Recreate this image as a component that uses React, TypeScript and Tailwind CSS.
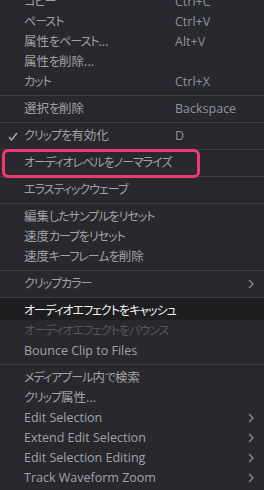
import React from 'react';

type Item =
    | { type: 'sep' }
    | { type: 'item'; label: string; shortcut?: string; check?: boolean; sub?: boolean; state?: 'hover' | 'disabled'; marked?: boolean };

const items: Item[] = [
    { type: 'item', label: 'コピー', shortcut: 'Ctrl+C' },
    { type: 'item', label: 'ペースト', shortcut: 'Ctrl+V' },
    { type: 'item', label: '属性をペースト...', shortcut: 'Alt+V' },
    { type: 'item', label: '属性を削除...' },
    { type: 'item', label: 'カット', shortcut: 'Ctrl+X' },
    { type: 'sep' },
    { type: 'item', label: '選択を削除', shortcut: 'Backspace' },
    { type: 'sep' },
    { type: 'item', label: 'クリップを有効化', shortcut: 'D', check: true },
    { type: 'sep' },
    { type: 'item', label: 'オーディオレベルをノーマライズ', marked: true },
    { type: 'sep' },
    { type: 'item', label: 'エラスティックウェーブ' },
    { type: 'sep' },
    { type: 'item', label: '編集したサンプルをリセット' },
    { type: 'item', label: '速度カーブをリセット' },
    { type: 'item', label: '速度キーフレームを削除' },
    { type: 'sep' },
    { type: 'item', label: 'クリップカラー', sub: true },
    { type: 'sep' },
    { type: 'item', label: 'オーディオエフェクトをキャッシュ', state: 'hover' },
    { type: 'item', label: 'オーディオエフェクトをバウンス', state: 'disabled' },
    { type: 'item', label: 'Bounce Clip to Files' },
    { type: 'sep' },
    { type: 'item', label: 'メディアプール内で検索' },
    { type: 'item', label: 'クリップ属性...' },
    { type: 'item', label: 'Edit Selection', sub: true },
    { type: 'item', label: 'Extend Edit Selection', sub: true },
    { type: 'item', label: 'Edit Selection Editing', sub: true },
    { type: 'item', label: 'Track Waveform Zoom', sub: true },
];

// kana runs are set tighter, like the proportional UI font in the screenshot
function Label({ text }: { text: string }) {
    const parts = text.match(/[\u3040-\u30ff]+|[\u4e00-\u9fff]+|[^\u3040-\u30ff\u4e00-\u9fff]+/g) || [];
    return (
        <>
            {parts.map((p, i) => {
                if (/[\u3040-\u30ff]/.test(p)) return <span key={i} className="text-[12px] tracking-[-1px]">{p}</span>;
                if (/[\u4e00-\u9fff]/.test(p)) return <span key={i} className="text-[12.5px]">{p}</span>;
                return <span key={i}>{p}</span>;
            })}
        </>
    );
}

function Chevron() {
    return (
        <svg width="6" height="10" viewBox="0 0 6 10" className="text-[#8a8a8e]">
            <path d="M1 1l4 4-4 4" fill="none" stroke="currentColor" strokeWidth="1.4" />
        </svg>
    );
}

function Check() {
    return (
        <svg width="10" height="9" viewBox="0 0 10 9" className="text-[#a0a0a4]">
            <path d="M1 5l2.5 3L9 1" fill="none" stroke="currentColor" strokeWidth="1.6" />
        </svg>
    );
}

export default function App() {
    return (
        <div
            className="w-[264px] h-[490px] overflow-hidden bg-[#28282e] text-[12.5px] [font-feature-settings:'palt'] font-['Open_Sans','Noto_Sans_CJK_JP',sans-serif]"
        >
            <div className="-mt-2 flex flex-col">
                {items.map((it, i) => {
                    if (it.type === 'sep') {
                        const nextHover = items[i + 1]?.type === 'item' && (items[i + 1] as any).state === 'hover';
                        return <div key={i} className={nextHover ? 'mt-[3px] mb-0 h-px bg-[#3d3d43]' : 'my-[3px] h-px bg-[#3d3d43]'} />;
                    }
                    const hover = it.state === 'hover';
                    const disabled = it.state === 'disabled';
                    return (
                        <div
                            key={i}
                            className={
                                'relative flex items-center ' +
                                (hover ? 'h-[22px] pt-[4px] bg-[#1e1e21] text-[#f2f2f2]' : 'h-5 ') +
                                (disabled ? 'mt-px text-[#56565b]' : hover ? '' : 'text-[#a2a2a6]')
                            }
                        >
                            <div className="w-6 flex justify-center pl-[2px]">{it.check && <Check />}</div>
                            <span className="flex-1 whitespace-nowrap leading-none">
                                <Label text={it.label} />
                            </span>
                            {it.shortcut && <span className="w-[89px] text-[#8d949c] leading-none">{it.shortcut}</span>}
                            {it.sub && <span className="w-[16px] flex items-center"><Chevron /></span>}
                            {it.marked && (
                                <div className="absolute left-[2px] top-[-4px] w-[198px] h-[29px] rounded-[6px] border-[3px] border-[#f23a6e]" />
                            )}
                        </div>
                    );
                })}
            </div>
        </div>
    );
}
